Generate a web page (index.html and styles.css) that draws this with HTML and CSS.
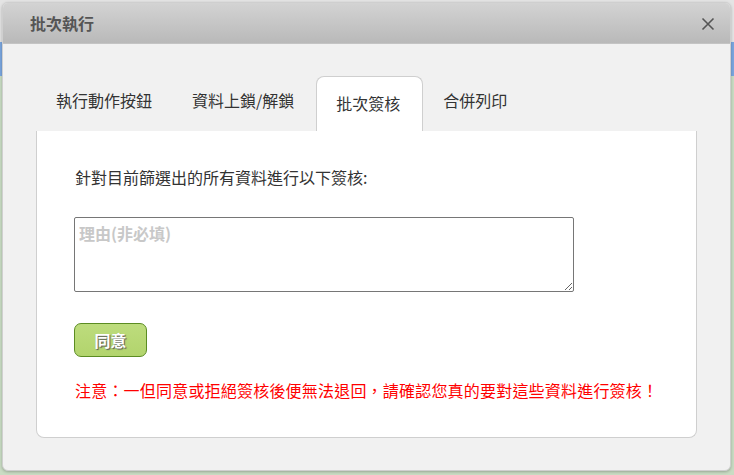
FILE: index.html
```html
<!DOCTYPE html>
<html lang="zh-Hant">
<head>
  <meta charset="UTF-8">
  <title>批次執行</title>
  <link rel="stylesheet" href="styles.css">
</head>
<body>
  <div class="dialog">
    <div class="dialog-header">
      <span class="dialog-title">批次執行</span>
      <svg class="dialog-close" width="14" height="14" viewBox="0 0 14 14">
        <path d="M1.5 1.5 L12.5 12.5 M12.5 1.5 L1.5 12.5" stroke="#555" stroke-width="1.6" fill="none"/>
      </svg>
    </div>
    <div class="dialog-body">
      <ul class="tabs">
        <li class="tab">執行動作按鈕</li>
        <li class="tab">資料上鎖/解鎖</li>
        <li class="tab active">批次簽核</li>
        <li class="tab">合併列印</li>
      </ul>
      <div class="panel">
        <p class="intro">針對目前篩選出的所有資料進行以下簽核:</p>
        <textarea class="reason" placeholder="理由(非必填)"></textarea>
        <button class="agree">同意</button>
        <p class="warning">注意：一但同意或拒絕簽核後便無法退回，請確認您真的要對這些資料進行簽核！</p>
      </div>
    </div>
  </div>
</body>
</html>
```

FILE: styles.css
```css
body {
  margin: 0;
  height: 475px;
  overflow: hidden;
  font-family: "Noto Sans CJK TC", "Noto Sans", sans-serif;
  color: #333;
  background: linear-gradient(#e4e4e4 0, #e4e4e4 42px, #7aa6df 42px, #7aa6df 76px, #c9dcc3 76px);
}
.dialog {
  margin: 2px 3px 0 2px;
  height: 467px;
  background: #f1f1f1;
  border: 1px solid #cfcfcf;
  border-radius: 6px;
  box-shadow: 0 1px 3px rgba(0,0,0,0.25);
  overflow: hidden;
  display: flex;
  flex-direction: column;
}
.dialog-header {
  height: 40px;
  flex: none;
  display: flex;
  align-items: center;
  justify-content: space-between;
  padding: 0 15px 0 27px;
  background: linear-gradient(#d3d3d3, #b9b9b9);
  border-bottom: 1px solid #c4c4c4;
}
.dialog-title {
  font-size: 16px;
  font-weight: bold;
  color: #555;
}
.dialog-close {
  margin-top: 2px;
}
.dialog-body {
  padding: 32px 33px 0 33px;
}
.tabs {
  list-style: none;
  margin: 0;
  padding: 0;
  display: flex;
  height: 55px;
}
.tab {
  padding: 13px 20px 0 20px;
  font-size: 16px;
  line-height: 22px;
  color: #333;
}
.tab:nth-child(2) {
  padding-right: 22px;
}
.tab.active {
  background: #fff;
  border: 1px solid #cfcfcf;
  border-bottom: none;
  border-radius: 8px 8px 0 0;
  padding: 15px 22px 0 19px;
  position: relative;
  z-index: 1;
  height: 55px;
  box-sizing: border-box;
}
.panel {
  background: #fff;
  border: 1px solid #cfcfcf;
  border-top: none;
  border-radius: 0 0 8px 8px;
  height: 307px;
  padding: 35px 38px 0 38px;
  box-sizing: border-box;
}
.intro {
  margin: 0;
  font-size: 16px;
  line-height: 22px;
}
.reason {
  display: block;
  margin-top: 29px;
  width: 500px;
  height: 75px;
  box-sizing: border-box;
  margin-left: -1px;
  border: 1px solid #767676;
  border-radius: 2px;
  padding: 4px 4px;
  font-family: inherit;
  font-size: 16px;
  line-height: 22px;
}
.reason::placeholder {
  color: #c8c8c8;
  font-weight: bold;
}
.agree {
  display: block;
  margin: 31px 0 0 -1px;
  width: 73px;
  height: 34px;
  background: linear-gradient(#bddc7d, #b2d46d);
  border: 1px solid #5b8c22;
  border-radius: 7px;
  font-family: inherit;
  font-size: 16px;
  font-weight: bold;
  color: #fff;
  text-shadow: 1px 1px 1px #555;
}
.warning {
  margin: 22px 0 0 0;
  font-size: 16px;
  line-height: 22px;
  letter-spacing: 0.2px;
  white-space: nowrap;
  color: #ff0000;
}
```
